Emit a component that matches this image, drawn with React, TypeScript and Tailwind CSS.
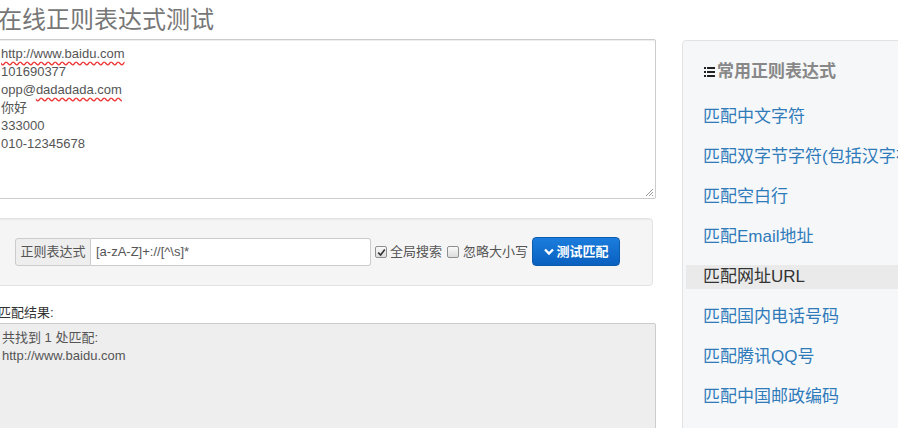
import React from "react";

const font = "font-['Liberation_Sans','Noto_Sans_CJK_SC',sans-serif]";

const ListIcon = () => (
    <svg width="11" height="10" viewBox="0 0 11 10" className="mr-[2px]">
        <rect x="0" y="0" width="2" height="2" fill="#222" />
        <rect x="3" y="0" width="8" height="2" fill="#222" />
        <rect x="0" y="4" width="2" height="2" fill="#222" />
        <rect x="3" y="4" width="8" height="2" fill="#222" />
        <rect x="0" y="8" width="2" height="2" fill="#222" />
        <rect x="3" y="8" width="8" height="2" fill="#222" />
    </svg>
);

const Check = ({ checked }: { checked?: boolean }) => (
    <span className="inline-flex w-[12px] h-[12px] items-center justify-center rounded-[2px] border border-[#8f8f8f] bg-gradient-to-b from-[#fafafa] to-[#dcdcdc]">
        {checked && (
            <svg width="9" height="9" viewBox="0 0 9 9">
                <path d="M1.2 4.6 L3.6 7 L7.8 1.6" fill="none" stroke="#333" strokeWidth="1.6" />
            </svg>
        )}
    </span>
);

const links = [
    "匹配中文字符",
    "匹配双字节字符(包括汉字在内)",
    "匹配空白行",
    "匹配Email地址",
    "匹配网址URL",
    "匹配国内电话号码",
    "匹配腾讯QQ号",
    "匹配中国邮政编码",
];

export default function App() {
    return (
        <div className={`${font} w-[898px] h-[428px] overflow-hidden bg-white flex items-start`}>
            {/* Main column */}
            <div className="ml-[-10px] w-[666px] shrink-0 flex flex-col">
                <h1 className="shrink-0 h-[39px] leading-[39px] text-[24px] text-[#777] pl-[8px] whitespace-nowrap">
                    在线正则表达式测试
                </h1>

                <div className="shrink-0 relative h-[160px] border border-[#ccc] rounded-[2px] bg-white shadow-[inset_0_1px_1px_rgba(0,0,0,0.075)] pt-[5px] pl-[10px] text-[13px] leading-[18px] text-[#555]">
                    <div>
                        <span className="underline decoration-wavy decoration-[#e33] underline-offset-[3px]">http://www.baidu.com</span>
                    </div>
                    <div>101690377</div>
                    <div>
                        opp@<span className="underline decoration-wavy decoration-[#e33] underline-offset-[3px]">dadadada.com</span>
                    </div>
                    <div>你好</div>
                    <div>333000</div>
                    <div>010-12345678</div>
                    <svg width="9" height="9" viewBox="0 0 9 9" className="absolute right-[1px] bottom-[1px]">
                        <path d="M8 1 L1 8 M8 4 L4 8 M8 7 L7 8" stroke="#999" strokeWidth="1" />
                    </svg>
                </div>

                <div className="shrink-0 mt-[19px] w-[663px] h-[68px] border border-[#e3e3e3] rounded-[4px] bg-[#f5f5f5] shadow-[inset_0_1px_1px_rgba(0,0,0,0.05)] pt-[19px] pl-[24px] flex items-start text-[13px] text-[#555]">
                    <div className="flex h-[28px]">
                        <span className="w-[76px] flex items-center justify-center border border-[#ccc] bg-[#eee] rounded-l-[3px] whitespace-nowrap">
                            正则表达式
                        </span>
                        <span className="w-[280px] flex items-center border border-l-0 border-[#ccc] bg-white rounded-r-[3px] pl-[5px] text-[13px]">
                            {"[a-zA-Z]+://[^\\s]*"}
                        </span>
                    </div>
                    <label className="ml-[4px] h-[28px] flex items-center gap-[3px] whitespace-nowrap">
                        <Check checked />
                        全局搜索
                    </label>
                    <label className="ml-[5px] h-[28px] flex items-center gap-[4px] whitespace-nowrap">
                        <Check />
                        忽略大小写
                    </label>
                    <button className="ml-[4px] mt-[-1px] w-[88px] h-[29px] flex items-center justify-center gap-[3px] rounded-[4px] border border-[#0b5cae] bg-gradient-to-b from-[#1b7ddd] to-[#0960bf] text-white text-[13px] font-bold whitespace-nowrap">
                        <svg width="10" height="8" viewBox="0 0 10 8">
                            <path d="M1 1.5 L5 5.5 L9 1.5" fill="none" stroke="#fff" strokeWidth="2.4" />
                        </svg>
                        测试匹配
                    </button>
                </div>

                <div className="shrink-0 mt-[17px] h-[20px] leading-[20px] text-[13px] text-[#333] pl-[8px]">匹配结果:</div>

                <div className="shrink-0 h-[160px] border border-[#ccc] bg-[#eee] rounded-[2px] pt-[5px] pl-[11px] text-[13px] leading-[18px] text-[#555]">
                    <div>共找到 1 处匹配:</div>
                    <div>http://www.baidu.com</div>
                </div>
            </div>

            {/* Sidebar */}
            <div className="ml-[26px] mt-[40px] w-[260px] shrink-0">
                <div className="h-[420px] border border-[#e3e3e3] rounded-[4px] bg-[#f6f7f9] pt-[19px]">
                    <div className="pl-[21px] h-[24px] flex items-center text-[17px] font-bold text-[#888] whitespace-nowrap">
                        <ListIcon />
                        常用正则表达式
                    </div>
                    <ul className="mt-[21px] flex flex-col gap-[16px]">
                        {links.map((l) => (
                            <li
                                key={l}
                                className={`ml-[3px] h-[24px] leading-[24px] pl-[17px] text-[17px] whitespace-nowrap ${
                                    l === "匹配网址URL" ? "bg-[#eaeaea] text-[#333]" : "text-[#2f7bb9]"
                                }`}
                            >
                                {l}
                            </li>
                        ))}
                    </ul>
                </div>
            </div>
        </div>
    );
}
